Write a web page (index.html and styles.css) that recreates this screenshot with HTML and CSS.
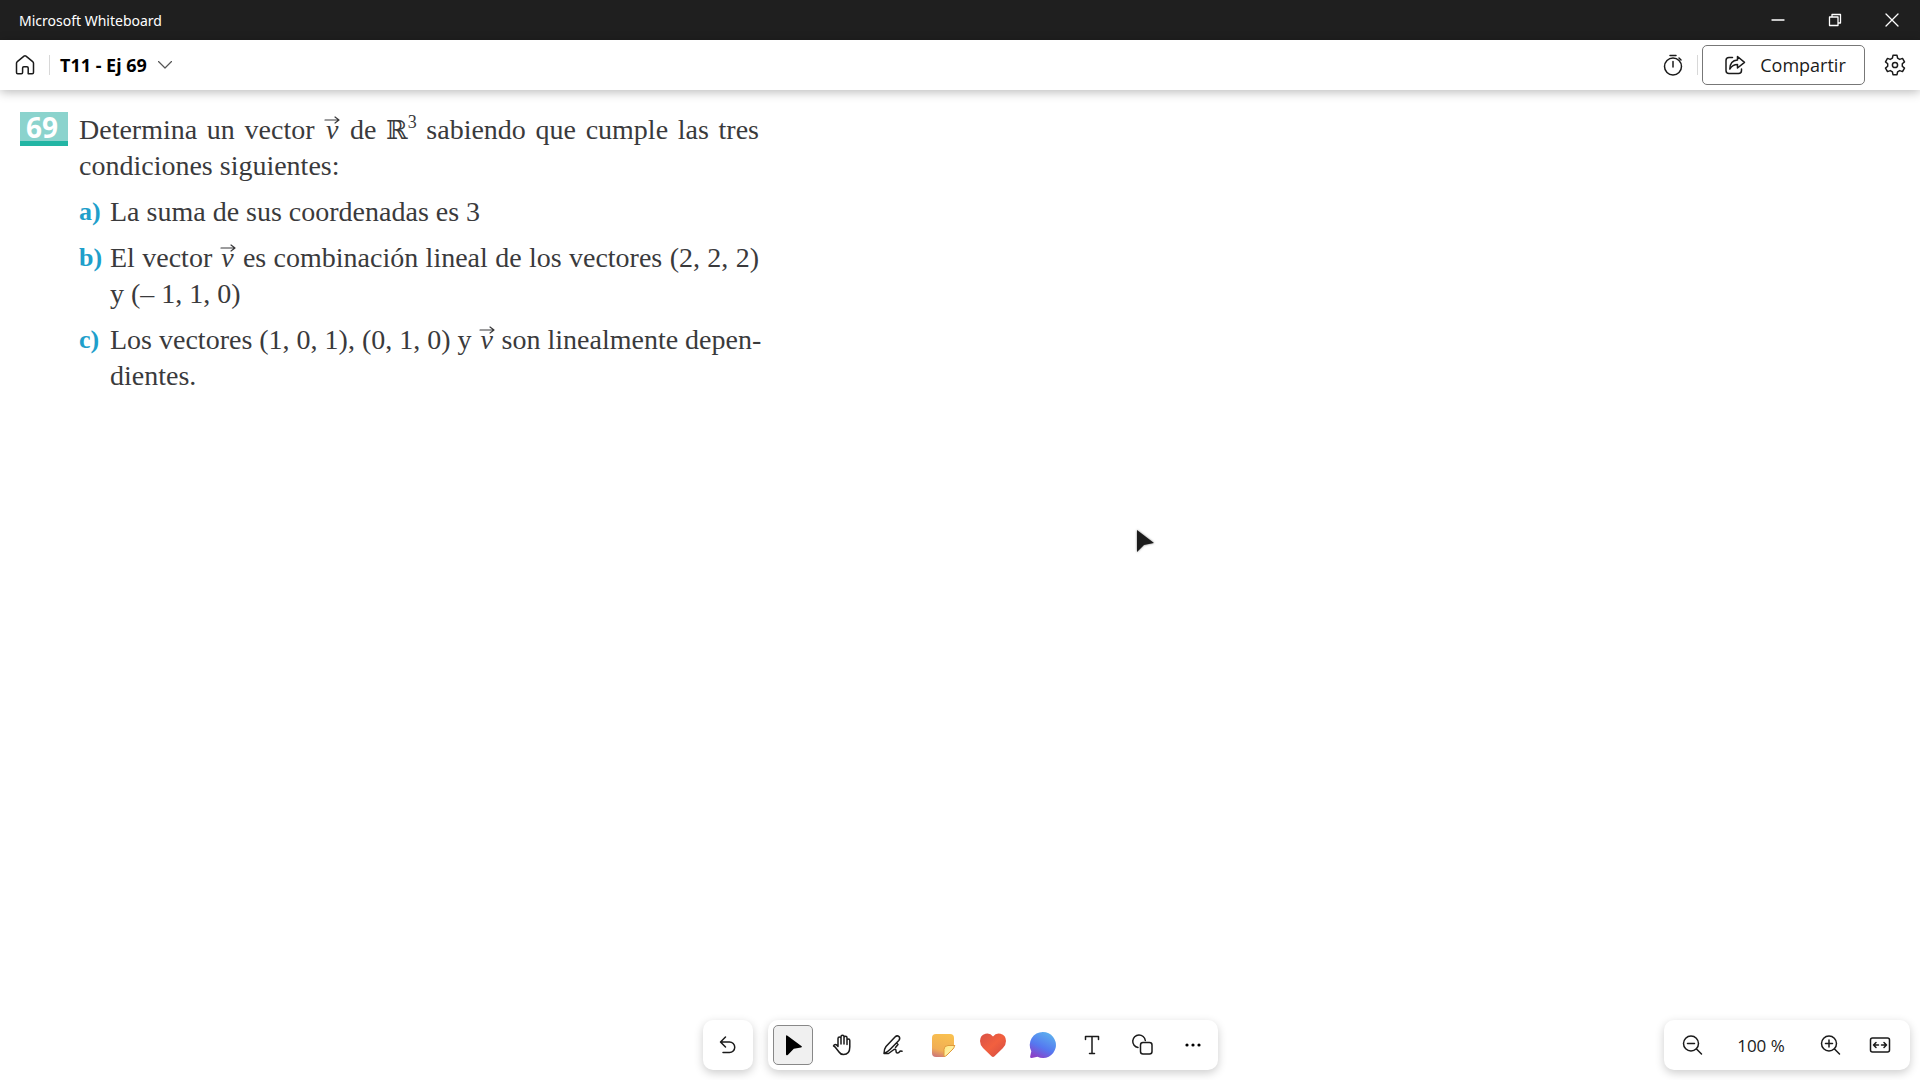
FILE: index.html
```html
<!DOCTYPE html>
<html lang="es">
<head>
    <meta charset="UTF-8">
    <meta name="viewport" content="width=device-width, initial-scale=1.0">
    <title>Microsoft Whiteboard</title>
    <link rel="stylesheet" href="styles.css">
</head>
<body>

<div class="titlebar">
    <span class="app-name">Microsoft Whiteboard</span>
    <div class="window-controls">
        <button aria-label="Minimizar">
            <svg width="14" height="14" viewBox="0 0 14 14"><path d="M1 7h12"/></svg>
        </button>
        <button aria-label="Restaurar">
            <svg width="14" height="14" viewBox="0 0 14 14"><path d="M1.500 4h8.500v8.500H1.500zM4 4V1.500h8.500V10H10"/></svg>
        </button>
        <button aria-label="Cerrar">
            <svg width="14" height="14" viewBox="0 0 14 14"><path d="M1 1l12 12M13 1L1 13"/></svg>
        </button>
    </div>
</div>

<header class="header">
    <button class="icon-button" aria-label="Inicio">
        <svg width="20" height="20" viewBox="0 0 20 20"><path d="M1.500 8.200Q1.500 7.200 2.300 6.600L9 1.200Q10 .5 11 1.200L17.700 6.600Q18.500 7.200 18.500 8.200V17.500Q18.500 18.700 17.300 18.700H13.200V13Q13.200 11.800 12 11.800H8.800Q7.600 11.800 7.600 13V17.500Q7.600 18.700 6.400 18.700H2.700Q1.500 18.700 1.500 17.500Z"/></svg>
    </button>
    <span class="divider"></span>
    <button class="board-name">
        T11 - Ej 69
        <svg width="14" height="8" viewBox="0 0 14 8"><path d="M.5.5L7 7 13.500.5"/></svg>
    </button>
    <div class="header-right">
        <button class="icon-button" aria-label="Temporizador">
            <svg width="20" height="22" viewBox="0 0 20 22"><circle cx="10" cy="12.500" r="8.500"/><path d="M10 7.500v5.500M7 1.500h6M16 4l2 2"/></svg>
        </button>
        <span class="divider"></span>
        <button class="share">
            <svg width="22" height="20" viewBox="0 0 22 20"><path d="M8.500 2.500H5Q2 2.500 2 5.500V15.500Q2 18.500 5 18.500H14.500Q17.500 18.500 17.500 15.500V14"/><path d="M13.500 1.500L20.500 7.300L13.500 13V9.500Q8.500 9.500 5.800 14Q6 5.500 13.500 5Z"/></svg>
            Compartir
        </button>
        <button class="icon-button" aria-label="Configuración">
            <svg width="22" height="22" viewBox="0 0 22 22"><path d="M9 1.300h4l.6 2.900 2.100 1.200 2.800-1 2 3.500-2.200 1.900v2.400l2.200 1.900-2 3.500-2.800-1-2.100 1.200-.6 2.900H9l-.6-2.900-2.100-1.200-2.800 1-2-3.500 2.200-1.900V9.800L1.500 7.900l2-3.500 2.800 1 2.100-1.200z"/><circle cx="11" cy="11" r="2.600"/></svg>
        </button>
    </div>
</header>

<main class="board">
    <article class="exercise">
        <div class="number">69</div>
        <div class="statement">
            <p>
                <span class="line full">Determina un vector <span class="vec">v<svg width="16" height="8" viewBox="0 0 16 8"><path d="M1 4h14M11 1l4 3-4 3"/></svg></span> de <span><span class="reals">ℝ</span><sup>3</sup></span> sabiendo que cumple las tres</span>
                <span class="line">condiciones siguientes:</span>
            </p>
            <div class="item">
                <b>a)</b>
                <p><span class="line">La suma de sus coordenadas es 3</span></p>
            </div>
            <div class="item">
                <b>b)</b>
                <p>
                    <span class="line full">El vector <span class="vec">v<svg width="16" height="8" viewBox="0 0 16 8"><path d="M1 4h14M11 1l4 3-4 3"/></svg></span> es combinación lineal de los vectores (2, 2, 2)</span>
                    <span class="line">y (– 1, 1, 0)</span>
                </p>
            </div>
            <div class="item">
                <b>c)</b>
                <p>
                    <span class="line full">Los vectores (1, 0, 1), (0, 1, 0) y <span class="vec">v<svg width="16" height="8" viewBox="0 0 16 8"><path d="M1 4h14M11 1l4 3-4 3"/></svg></span> son linealmente depen-</span>
                    <span class="line">dientes.</span>
                </p>
            </div>
        </div>
    </article>

    <svg class="pointer" width="24" height="30" viewBox="0 0 24 30"><path d="M5 4v22l7-7 10-2z"/></svg>

    <div class="bottom-bars">
        <div class="bar undo">
            <button class="tool" aria-label="Deshacer">
                <svg width="24" height="24" viewBox="0 0 24 24"><path d="M9.500 4L4.500 9l5 5M5 9h8.500a5 5 0 0 1 0 10.500H7"/></svg>
            </button>
        </div>
        <div class="bar tools">
            <button class="tool selected" aria-label="Seleccionar">
                <svg width="24" height="24" viewBox="0 0 24 24"><path class="solid" d="M5 3.500Q5 1.500 6.500 2.800L20.700 13.300Q21.500 14.200 20 14.600L12.800 15.800 7 21.700Q5 23 5 21Z"/></svg>
            </button>
            <button class="tool" aria-label="Mover">
                <svg width="24" height="24" viewBox="0 0 24 24"><path d="M7 13V5.500a1.500 1.500 0 0 1 3 0V11M10 10V3.700a1.500 1.500 0 0 1 3 0V11M13 10V4.700a1.500 1.500 0 0 1 3 0V11.500M16 11V7.500a1.400 1.400 0 0 1 2.800 0V14Q18.800 21.500 12.500 21.500Q9.500 21.500 8 19L4.500 14.500Q3.500 13.200 2.500 13Q3.500 10.800 5.700 12L7 13.500"/></svg>
            </button>
            <button class="tool" aria-label="Lápices">
                <svg width="24" height="24" viewBox="0 0 24 24"><path d="M3 20.500Q3 16 5 13.500L14 4Q16 2 18 3.500 19.500 5.500 17.800 7.500L9 16.500Q6.500 19 3 20.500M15.500 10l1.500 1.500-2.500 3M3 20.500H7.500L13 16.500q2-.8 2 1.200 0 2.300 1.500 2.300t2-1.300q.7-1 2.500-.4"/></svg>
            </button>
            <button class="tool" aria-label="Notas">
                <svg width="26" height="26" viewBox="0 0 26 26">
                    <defs>
                        <linearGradient id="note" x1="0.600" y1="0" x2="0.300" y2="1"><stop offset="0" stop-color="#f9c04f"/><stop offset=".7" stop-color="#f1ae55"/><stop offset="1" stop-color="#cf7a76"/></linearGradient>
                        <linearGradient id="fold" x1="0" y1="0" x2="1" y2="1"><stop offset="0" stop-color="#ffe680"/><stop offset=".5" stop-color="#fff0a0"/><stop offset="1" stop-color="#f5b93a"/></linearGradient>
                    </defs>
                    <path class="note" d="M6 2h14q4 0 4 4v8L14 25H6q-4 0-4-4V6q0-4 4-4z"/>
                    <path class="fold" d="M24.500 13.500H18q-4 0-4 4V24.500q1.500 0 3-1.500l6-6q1.500-1.500 1.500-3.500z"/>
                </svg>
            </button>
            <button class="tool" aria-label="Reacciones">
                <svg width="28" height="28" viewBox="0 0 28 28">
                    <defs>
                        <linearGradient id="heart" x1="0" y1="0" x2="1" y2="1"><stop offset="0" stop-color="#d85146"/><stop offset=".5" stop-color="#f2603f"/><stop offset="1" stop-color="#d14a43"/></linearGradient>
                    </defs>
                    <path class="heart" d="M14 5.500Q17 1.500 21.500 2.700 27 4.200 27 10q0 3.800-3 7l-8.500 8.300q-1.500 1.200-3 0L4 17Q1 13.800 1 10 1 4.200 6.500 2.700 11 1.500 14 5.500z"/>
                </svg>
            </button>
            <button class="tool" aria-label="Comentarios">
                <svg width="28" height="28" viewBox="0 0 28 28">
                    <defs>
                        <linearGradient id="bubble" x1=".8" y1="0" x2=".3" y2="1"><stop offset="0" stop-color="#5db4ee"/><stop offset=".6" stop-color="#5578f0"/><stop offset="1" stop-color="#8a42c8"/></linearGradient>
                    </defs>
                    <path class="bubble" d="M14 1a13 13 0 1 1-5.500 24.800L2.800 27Q.8 27.300 1.200 25.300L2.300 20.200A13 13 0 0 1 14 1z"/>
                </svg>
            </button>
            <button class="tool" aria-label="Texto">
                <svg width="24" height="24" viewBox="0 0 24 24"><path d="M4.500 6.500V3.500h13v3M11 3.500v17M8.500 20.500h5"/></svg>
            </button>
            <button class="tool" aria-label="Formas">
                <svg width="24" height="24" viewBox="0 0 24 24"><path d="M7 14.500a6.300 6.300 0 1 1 7.300-7"/><rect x="9.500" y="9.500" width="11.500" height="11.500" rx="2.500"/></svg>
            </button>
            <button class="tool" aria-label="Más opciones">
                <svg width="24" height="24" viewBox="0 0 24 24"><circle class="solid" cx="6" cy="12" r="1.600"/><circle class="solid" cx="12" cy="12" r="1.600"/><circle class="solid" cx="18" cy="12" r="1.600"/></svg>
            </button>
        </div>
        <div class="bar zoom">
            <button class="tool" aria-label="Alejar">
                <svg width="24" height="24" viewBox="0 0 24 24"><circle cx="11" cy="10.500" r="7.500"/><path d="M7.500 10.500h7M16.500 16l5 5"/></svg>
            </button>
            <span class="zoom-level">100 %</span>
            <button class="tool" aria-label="Acercar">
                <svg width="24" height="24" viewBox="0 0 24 24"><circle cx="11" cy="10.500" r="7.500"/><path d="M7.500 10.500h7M11 7v7M16.500 16l5 5"/></svg>
            </button>
            <button class="tool" aria-label="Ajustar a la pantalla">
                <svg width="24" height="24" viewBox="0 0 24 24"><rect x="2.500" y="5" width="19" height="14" rx="2"/><path d="M10.500 12H5.500M8 9.500L5.500 12 8 14.500M13.500 12h5M16 9.500l2.500 2.500-2.500 2.500"/></svg>
            </button>
        </div>
    </div>
</main>

</body>
</html>
```

FILE: styles.css
```css
* {
    margin: 0;
    padding: 0;
    box-sizing: border-box;
}

body {
    display: flex;
    flex-direction: column;
    min-height: 100vh;
    font-family: "Noto Sans", "Open Sans", sans-serif;
    color: #1b1b1b;
    background-color: #fff;
}

button {
    display: flex;
    align-items: center;
    justify-content: center;
    border: none;
    background: none;
    font-family: inherit;
    color: inherit;
    cursor: pointer;
}

svg {
    fill: none;
    stroke: #1b1b1b;
    stroke-width: 1.5;
    stroke-linecap: round;
    stroke-linejoin: round;
    flex-shrink: 0;
}

/* Window title bar */
.titlebar {
    display: flex;
    align-items: center;
    justify-content: space-between;
    height: 40px;
    padding-left: 19px;
    background-color: #1f1f1f;
    color: #fff;
    font-size: 14px;
}

.window-controls {
    display: flex;
}

.window-controls button {
    width: 57px;
    height: 40px;
}

.window-controls svg {
    stroke: #fff;
    stroke-width: 1.3;
}

/* Board header */
.header {
    display: flex;
    align-items: center;
    height: 50px;
    padding: 0 5px;
    background-color: #fff;
    box-shadow: 0 2px 10px rgba(0, 0, 0, 0.28);
    z-index: 1;
}

.icon-button {
    width: 40px;
    height: 40px;
}

.divider {
    width: 1px;
    height: 20px;
    margin: 0 4px;
    background-color: #d8d8d8;
}

.board-name {
    gap: 11px;
    height: 40px;
    padding: 0 6px;
    font-size: 18px;
    font-weight: 700;
    color: #000;
}

.board-name svg {
    stroke: #555;
    stroke-width: 1.2;
}

.header-right {
    display: flex;
    align-items: center;
    margin-left: auto;
}

.share {
    gap: 14px;
    width: 163px;
    height: 40px;
    padding-left: 3px;
    margin-right: 10px;
    border: 1px solid #777;
    border-radius: 5px;
    font-family: "Open Sans", sans-serif;
    font-size: 18px;
}

/* Canvas */
.board {
    position: relative;
    flex: 1;
}

.exercise {
    display: flex;
    align-items: flex-start;
    gap: 11px;
    padding: 22px 20px;
}

.number {
    width: 48px;
    height: 34px;
    padding-right: 4px;
    border-bottom: 5px solid #22b5a4;
    background-color: #8bd3cd;
    color: #fff;
    font-size: 28px;
    font-weight: 700;
    line-height: 31px;
    text-align: center;
}

.statement {
    display: flex;
    flex-direction: column;
    gap: 10px;
    width: 680px;
    font-family: "Liberation Serif", serif;
    font-size: 28px;
    line-height: 36px;
    color: #3a3a3c;
}

.line {
    display: block;
    white-space: nowrap;
}

.full {
    text-align-last: justify;
}

.item {
    display: flex;
}

.item b {
    flex-shrink: 0;
    width: 31px;
    color: #1f9fcb;
    font-size: 26px;
}

.item p {
    flex: 1;
    min-width: 0;
}

.vec {
    position: relative;
    display: inline-block;
    width: 16px;
    font-style: italic;
    text-align: center;
    text-align-last: center;
}

.vec svg {
    position: absolute;
    top: 4px;
    left: 0;
    stroke: #3a3a3c;
    stroke-width: 1.2;
}

.reals {
    font-family: "DejaVu Serif", serif;
    font-size: 26px;
    line-height: 1;
}

.statement sup {
    font-size: 18px;
    line-height: 1;
    vertical-align: 11px;
}

.pointer {
    position: absolute;
    top: 436px;
    left: 1132px;
    fill: #1b1b1b;
    stroke: none;
    filter: drop-shadow(0 0 1px rgba(0, 0, 0, 0.5));
}

/* Floating toolbars */
.bottom-bars {
    position: absolute;
    left: 10px;
    right: 10px;
    bottom: 10px;
    display: grid;
    grid-template-columns: 1fr auto auto 1fr;
    column-gap: 15px;
}

.bar {
    display: flex;
    align-items: center;
    gap: 10px;
    height: 50px;
    padding: 5px;
    border-radius: 10px;
    background-color: #fff;
    box-shadow: 0 3px 10px rgba(0, 0, 0, 0.2);
}

.undo {
    grid-column: 2;
}

.zoom {
    grid-column: 4;
    justify-self: end;
    padding: 5px 10px 5px 8px;
}

.tool {
    width: 40px;
    height: 40px;
    border-radius: 5px;
}

.selected {
    border: 1px solid #888;
    background-color: #f0f0f0;
}

.solid {
    fill: #000;
    stroke: none;
}

.note {
    fill: url(#note);
    stroke: none;
}

.fold {
    fill: url(#fold);
    stroke: #e09a3c;
    stroke-width: 1;
}

.heart {
    fill: url(#heart);
    stroke: none;
}

.bubble {
    fill: url(#bubble);
    stroke: none;
}

.zoom-level {
    width: 78px;
    font-family: "Open Sans", sans-serif;
    font-size: 17px;
    text-align: center;
}
```
